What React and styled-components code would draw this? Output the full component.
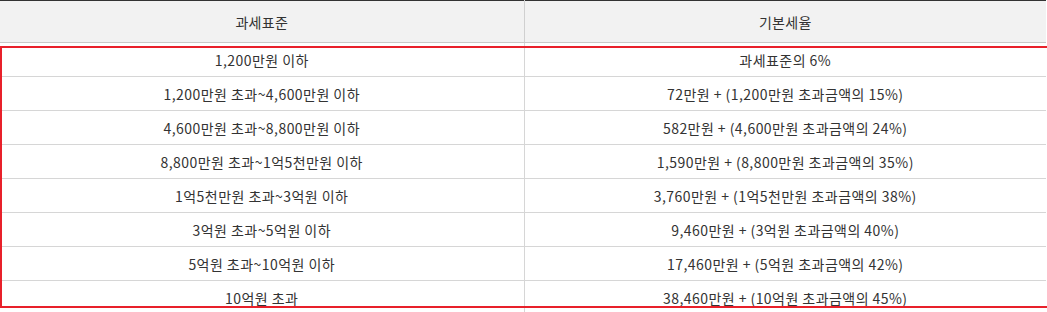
import React from "react";
import styled, { createGlobalStyle } from "styled-components";

const GlobalStyle = createGlobalStyle`
  body {
    margin: 0;
    background: #fff;
    font-family: "Noto Sans CJK KR", "Noto Sans", sans-serif;
    color: #333;
  }
`;

const Wrap = styled.div`
  position: relative;
  width: 1046px;
`;

const Table = styled.table`
  width: 100%;
  border-collapse: collapse;
  table-layout: fixed;
  border-top: 1px solid #333;
`;

const Th = styled.th`
  height: 41px;
  padding: 0;
  background: #f2f2f2;
  font-size: 14px;
  letter-spacing: 0.3px;
  font-weight: normal;
  color: #333;
  border-bottom: 1px solid #c8c8c8;
  border-left: ${(p) => (p.$first ? "none" : "1px solid #d0d0d0")};
`;

const Td = styled.td`
  height: 33px;
  padding: 0;
  text-align: center;
  font-size: 14px;
  letter-spacing: 0.45px;
  color: #333;
  border-bottom: 1px solid #d6d6d6;
  border-left: ${(p) => (p.$first ? "none" : "1px solid #d6d6d6")};
`;

const Highlight = styled.div`
  position: absolute;
  top: 46px;
  left: 0;
  right: -4px;
  height: 262px;
  box-sizing: border-box;
  border: 2px solid #e8202a;
  pointer-events: none;
`;

const rows = [
  ["1,200만원 이하", "과세표준의 6%"],
  ["1,200만원 초과~4,600만원 이하", "72만원 + (1,200만원 초과금액의 15%)"],
  ["4,600만원 초과~8,800만원 이하", "582만원 + (4,600만원 초과금액의 24%)"],
  ["8,800만원 초과~1억5천만원 이하", "1,590만원 + (8,800만원 초과금액의 35%)"],
  ["1억5천만원 초과~3억원 이하", "3,760만원 + (1억5천만원 초과금액의 38%)"],
  ["3억원 초과~5억원 이하", "9,460만원 + (3억원 초과금액의 40%)"],
  ["5억원 초과~10억원 이하", "17,460만원 + (5억원 초과금액의 42%)"],
  ["10억원 초과", "38,460만원 + (10억원 초과금액의 45%)"],
];

export default function App() {
  return (
    <Wrap>
      <GlobalStyle />
      <Table>
        <colgroup>
          <col style={{ width: 524 }} />
          <col />
        </colgroup>
        <thead>
          <tr>
            <Th $first>과세표준</Th>
            <Th>기본세율</Th>
          </tr>
        </thead>
        <tbody>
          {rows.map(([base, rate]) => (
            <tr key={base}>
              <Td $first>{base}</Td>
              <Td>{rate}</Td>
            </tr>
          ))}
        </tbody>
      </Table>
      <Highlight />
    </Wrap>
  );
}
